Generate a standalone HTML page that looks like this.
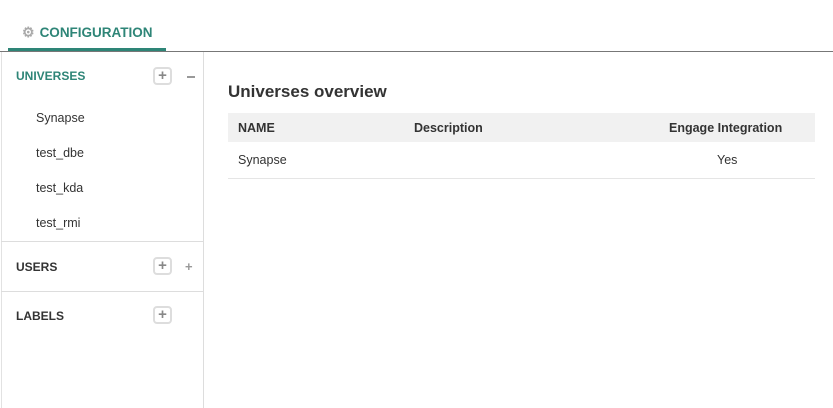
<!DOCTYPE html>
<html><head><style>
*{margin:0;padding:0;box-sizing:border-box}
body{width:833px;height:408px;background:#fff;font-family:"Liberation Sans",sans-serif;position:relative;overflow:hidden;color:#333}
.abs{position:absolute}
.tab{left:22px;top:24px;font-size:13.5px;font-weight:bold;color:#2e8577}
.uline{left:8px;top:48px;width:158px;height:3px;background:#2e8577}
.hline{left:0;top:51px;width:833px;height:1px;background:#777}
.side{left:1px;top:52px;width:203px;height:356px;border-left:1px solid #e2e2e2;border-right:1px solid #ddd}
.sec{font-size:12px;font-weight:bold}
.item{font-size:12.5px;color:#333;left:36px}
.pb{width:19px;height:18px;border:2px solid #ddd;border-radius:4px;font-size:15px;font-weight:bold;color:#888;text-align:center;line-height:14px}
.sep{left:1px;width:202px;height:1px;background:#ddd}
</style></head><body>
<div class="abs tab"><span style="color:#aaa;margin-right:5px;font-size:14px">⚙</span>CONFIGURATION</div>
<div class="abs uline"></div>
<div class="abs hline"></div>
<div class="abs side"></div>
<div class="abs sec" style="left:16px;top:69px;color:#2e8577">UNIVERSES</div>
<div class="abs pb" style="left:153px;top:67px">+</div>
<div class="abs" style="left:187px;top:76px;width:8px;height:2px;background:#999"></div>
<div class="abs item" style="top:111px">Synapse</div>
<div class="abs item" style="top:146px">test_dbe</div>
<div class="abs item" style="top:181px">test_kda</div>
<div class="abs item" style="top:216px">test_rmi</div>
<div class="abs sep" style="top:241px"></div>
<div class="abs sec" style="left:16px;top:260px">USERS</div>
<div class="abs pb" style="left:153px;top:257px">+</div>
<div class="abs" style="left:185px;top:259px;font-size:13px;font-weight:bold;color:#999">+</div>
<div class="abs sep" style="top:291px"></div>
<div class="abs sec" style="left:16px;top:309px">LABELS</div>
<div class="abs pb" style="left:153px;top:306px">+</div>
<div class="abs" style="left:228px;top:82px;font-size:17px;font-weight:bold;color:#333">Universes overview</div>
<div class="abs" style="left:228px;top:113px;width:587px;height:29px;background:#f1f1f1"></div>
<div class="abs" style="left:238px;top:121px;font-size:12.5px;font-weight:bold">NAME</div>
<div class="abs" style="left:414px;top:121px;font-size:12.5px;font-weight:bold">Description</div>
<div class="abs" style="left:669px;top:121px;font-size:12.5px;font-weight:bold">Engage Integration</div>
<div class="abs" style="left:238px;top:153px;font-size:12.5px">Synapse</div>
<div class="abs" style="left:717px;top:153px;font-size:12.5px">Yes</div>
<div class="abs" style="left:228px;top:178px;width:587px;height:1px;background:#e5e5e5"></div>
</body></html>
